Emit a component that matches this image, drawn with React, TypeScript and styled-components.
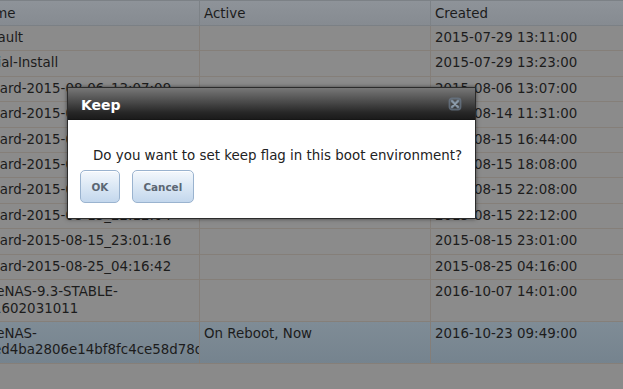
import React from "react";
import styled, { createGlobalStyle } from "styled-components";

const Global = createGlobalStyle`
  html, body { margin: 0; padding: 0; background: #8a8a8a; }
  body { font-family: "DejaVu Sans", Verdana, sans-serif; }
`;

const Page = styled.div`
  position: relative;
  width: 623px;
  height: 389px;
  overflow: hidden;
  background: #8a8a8a;
`;

const Grid = styled.table`
  margin-left: -28px;
  border-collapse: separate;
  border-spacing: 0;
  table-layout: fixed;
  width: 686px;
  font-size: 13.4px;
  color: #1c1c1c;
`;

const HeadCell = styled.th`
  text-align: left;
  font-weight: normal;
  padding: 5px 4px 3px 4px;
  line-height: 16px;
  background: linear-gradient(#8e9399, #868b91);
  border-top: 1px solid #7c8186;
  border-bottom: 1px solid #7b8085;
  border-right: 1px solid #7d8287;
  white-space: nowrap;
  overflow: hidden;
`;

const Row = styled.tr<{ $selected?: boolean }>`
  background: ${(p) =>
    p.$selected ? "linear-gradient(#7f8c96, #75838e)" : "#8b8b8b"};
`;

const Cell = styled.td`
  padding: 4px 4px 3.8px 4px;
  line-height: 16.6px;
  vertical-align: top;
  border-bottom: 1px solid #857f79;
  border-right: 1px solid #847e79;
  overflow: hidden;
`;

const Dialog = styled.div`
  position: absolute;
  left: 67px;
  top: 87px;
  width: 407px;
  border: 1px solid #2b2b2b;
  background: #fff;
  box-shadow: 0 0 4px rgba(0, 0, 0, 0.55);
  display: flex;
  flex-direction: column;
`;

const TitleBar = styled.div`
  height: 31px;
  display: flex;
  align-items: center;
  justify-content: space-between;
  padding: 0 13px 0 13px;
  background: linear-gradient(#777777 0%, #4a4a4a 45%, #262626 80%, #1b1b1b 100%);
  border-bottom: 1px solid #161616;
`;

const Title = styled.span`
  color: #ffffff;
  font-weight: bold;
  font-size: 14px;
  line-height: 16px;
  padding-top: 2px;
`;

const Close = styled.span`
  display: flex;
  width: 14px;
  height: 14px;
  margin-top: 1px;
`;

const Body = styled.div`
  display: flex;
  flex-direction: column;
  padding: 28px 12px 15px 12px;
`;

const Message = styled.div`
  font-size: 13.4px;
  line-height: 16px;
  color: #222;
  padding-left: 13px;
`;

const Buttons = styled.div`
  display: flex;
  gap: 12px;
  margin-top: 6px;
`;

const Button = styled.button`
  height: 33px;
  padding: 0 10.5px;
  border: 1px solid #9ab3cf;
  border-radius: 5px;
  background: linear-gradient(#f4f8fc 0%, #dde9f5 45%, #c3d7ed 100%);
  box-shadow: inset 0 1px 0 #ffffff;
  font-family: "DejaVu Sans", Verdana, sans-serif;
  font-weight: bold;
  font-size: 10.4px;
  color: #5b6673;
  cursor: pointer;
`;

const rows: { name: string; active: string; created: string; selected?: boolean }[] = [
  { name: "default", active: "", created: "2015-07-29 13:11:00" },
  { name: "Initial-Install", active: "", created: "2015-07-29 13:23:00" },
  { name: "Wizard-2015-08-06_13:07:09", active: "", created: "2015-08-06 13:07:00" },
  { name: "Wizard-2015-08-14_11:31:25", active: "", created: "2015-08-14 11:31:00" },
  { name: "Wizard-2015-08-15_16:44:50", active: "", created: "2015-08-15 16:44:00" },
  { name: "Wizard-2015-08-15_18:08:12", active: "", created: "2015-08-15 18:08:00" },
  { name: "Wizard-2015-08-15_22:08:33", active: "", created: "2015-08-15 22:08:00" },
  { name: "Wizard-2015-08-15_22:12:04", active: "", created: "2015-08-15 22:12:00" },
  { name: "Wizard-2015-08-15_23:01:16", active: "", created: "2015-08-15 23:01:00" },
  { name: "Wizard-2015-08-25_04:16:42", active: "", created: "2015-08-25 04:16:00" },
  { name: "FreeNAS-9.3-STABLE-201602031011", active: "", created: "2016-10-07 14:01:00" },
  {
    name: "FreeNAS-29ed4ba2806e14bf8fc4ce58d78d2a1c3",
    active: "On Reboot, Now",
    created: "2016-10-23 09:49:00",
    selected: true,
  },
];

const CloseIcon = () => (
  <svg width="14" height="14" viewBox="0 0 14 14">
    <rect x="1.5" y="1.5" width="11" height="11" rx="2.5" fill="none" stroke="#6a7889" strokeWidth="1.8" opacity="0.75" />
    <path d="M4 4 L10 10 M10 4 L4 10" stroke="#7c8b9a" strokeWidth="2.6" strokeLinecap="round" />
    <path d="M4.6 4.6 L9.4 9.4 M9.4 4.6 L4.6 9.4" stroke="#95a3b1" strokeWidth="0.8" strokeLinecap="round" />
  </svg>
);

export default function App() {
  return (
    <Page>
      <Global />
      <Grid>
        <colgroup>
          <col style={{ width: 228 }} />
          <col style={{ width: 231 }} />
          <col style={{ width: 227 }} />
        </colgroup>
        <thead>
          <tr>
            <HeadCell>Name</HeadCell>
            <HeadCell>Active</HeadCell>
            <HeadCell>Created</HeadCell>
          </tr>
        </thead>
        <tbody>
          {rows.map((r) => (
            <Row key={r.name} $selected={r.selected}>
              <Cell>{r.name}</Cell>
              <Cell>{r.active}</Cell>
              <Cell>{r.created}</Cell>
            </Row>
          ))}
        </tbody>
      </Grid>
      <Dialog role="dialog" aria-label="Keep">
        <TitleBar>
          <Title>Keep</Title>
          <Close>
            <CloseIcon />
          </Close>
        </TitleBar>
        <Body>
          <Message>Do you want to set keep flag in this boot environment?</Message>
          <Buttons>
            <Button>OK</Button>
            <Button>Cancel</Button>
          </Buttons>
        </Body>
      </Dialog>
    </Page>
  );
}
